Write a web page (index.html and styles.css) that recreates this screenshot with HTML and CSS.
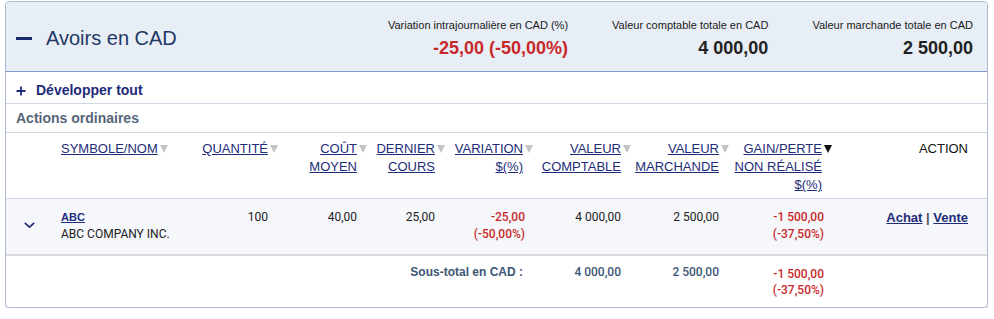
FILE: index.html
```html
<!DOCTYPE html>
<html lang="fr">
<head>
<meta charset="utf-8">
<title>Avoirs en CAD</title>
<link rel="stylesheet" href="styles.css">
</head>
<body>
<section class="panel">
  <header class="panel-head">
    <div class="title-wrap">
      <span class="collapse-icon" aria-hidden="true"></span>
      <h1 class="title">Avoirs en CAD</h1>
    </div>
    <div class="summary">
      <div class="sum-item">
        <div class="sum-label">Variation intrajournalière en CAD (%)</div>
        <div class="sum-value neg">-25,00 (-50,00%)</div>
      </div>
      <div class="sum-item">
        <div class="sum-label">Valeur comptable totale en CAD</div>
        <div class="sum-value">4 000,00</div>
      </div>
      <div class="sum-item">
        <div class="sum-label">Valeur marchande totale en CAD</div>
        <div class="sum-value">2 500,00</div>
      </div>
    </div>
  </header>

  <div class="expand-row">
    <svg class="plus-icon" width="10" height="10" viewBox="0 0 10 10" aria-hidden="true"><path d="M5 0.5V9.5M0.5 5H9.5" stroke="#1e2c78" stroke-width="1.8" fill="none"/></svg>
    <span class="expand-label">Développer tout</span>
  </div>

  <div class="group-row">Actions ordinaires</div>

  <table class="holdings">
    <colgroup>
      <col class="w0"><col class="w1"><col class="w2"><col class="w3"><col class="w4">
      <col class="w5"><col class="w6"><col class="w7"><col class="w8"><col class="w9">
    </colgroup>
    <thead>
      <tr>
        <th class="blank"></th>
        <th class="left"><span class="sort"><a href="#">SYMBOLE/NOM</a><i class="arrow"></i></span></th>
        <th><span class="sort"><a href="#">QUANTITÉ</a><i class="arrow"></i></span></th>
        <th><span class="sort"><a href="#">COÛT<br>MOYEN</a><i class="arrow"></i></span></th>
        <th><span class="sort"><a href="#">DERNIER<br>COURS</a><i class="arrow"></i></span></th>
        <th><span class="sort"><a href="#">VARIATION<br>$(%)</a><i class="arrow"></i></span></th>
        <th><span class="sort"><a href="#">VALEUR<br>COMPTABLE</a><i class="arrow"></i></span></th>
        <th><span class="sort"><a href="#">VALEUR<br>MARCHANDE</a><i class="arrow"></i></span></th>
        <th><span class="sort"><a href="#">GAIN/PERTE<br>NON RÉALISÉ<br>$(%)</a><i class="arrow active"></i></span></th>
        <th class="action-head">ACTION</th>
      </tr>
    </thead>
    <tbody>
      <tr>
        <td class="toggle"><svg class="chevron" width="11" height="6" viewBox="0 0 11 6" aria-hidden="true"><path d="M0.8 0.8L5.5 5.2L10.2 0.8" stroke="#1e2c78" stroke-width="1.6" fill="none"/></svg></td>
        <td class="left"><a class="sym" href="#">ABC</a><div class="company">ABC COMPANY INC.</div></td>
        <td>100</td>
        <td>40,00</td>
        <td>25,00</td>
        <td class="neg red">-25,00<br>(-50,00%)</td>
        <td>4 000,00</td>
        <td>2 500,00</td>
        <td class="neg red">-1 500,00<br>(-37,50%)</td>
        <td class="actions"><a href="#">Achat</a> <span class="sep">|</span> <a href="#">Vente</a></td>
      </tr>
    </tbody>
    <tfoot>
      <tr>
        <td></td>
        <td colspan="5" class="sub-label">Sous-total en CAD :</td>
        <td class="sub-num">4 000,00</td>
        <td class="sub-num">2 500,00</td>
        <td class="sub-num neg red">-1 500,00<br>(-37,50%)</td>
        <td></td>
      </tr>
    </tfoot>
  </table>
</section>
</body>
</html>
```

FILE: styles.css
```css
* { box-sizing: border-box; }

html, body {
  margin: 0;
  padding: 0;
  background: #ffffff;
}

body {
  font-family: "Liberation Sans", Arial, sans-serif;
  color: #1a1a1a;
}

.panel {
  margin: 1px 6px 0 5px;
  border: 1px solid #aebad4;
  border-radius: 4px;
  overflow: hidden;
  box-shadow: 0 1px 0 #c3cbdd;
}

/* Header */
.panel-head {
  display: flex;
  justify-content: space-between;
  height: 70px;
  background: #e8eef5;
  border-bottom: 1px solid #7f96c8;
}

.title-wrap {
  display: flex;
  align-items: center;
  padding: 3px 0 0 10px;
}

.collapse-icon {
  display: block;
  width: 16px;
  height: 3px;
  background: #1a2a6c;
}

.title {
  margin: 0 0 0 14px;
  font-size: 20px;
  line-height: 24px;
  font-weight: normal;
  color: #1d3966;
}

.summary {
  display: flex;
  gap: 44px;
  padding: 16px 14px 0 0;
}

.sum-item {
  text-align: right;
}

.sum-label {
  font-size: 11px;
  line-height: 14px;
  color: #1a1a1a;
}

.sum-value {
  margin-top: 5px;
  font-size: 18px;
  line-height: 22px;
  font-weight: bold;
  color: #222222;
}

.sum-value.neg { color: #c8282a; }

/* Expand / group rows */
.expand-row {
  display: flex;
  align-items: center;
  gap: 10px;
  height: 32px;
  padding: 4px 0 0 10px;
  border-bottom: 1px solid #ccd6e4;
}

.plus-icon { display: block; margin-top: 3px; }

.expand-label {
  font-size: 14px;
  font-weight: bold;
  color: #1e2c78;
}

.group-row {
  height: 29px;
  display: flex;
  align-items: center;
  padding-left: 10px;
  font-size: 14px;
  font-weight: bold;
  color: #56657a;
  border-bottom: 1px solid #ccd6e4;
}

/* Table */
.holdings {
  width: 100%;
  table-layout: fixed;
  border-collapse: collapse;
}

.w0 { width: 55px; }
.w1 { width: 129px; }
.w2 { width: 90px; }
.w3 { width: 89px; }
.w4 { width: 78px; }
.w5 { width: 88px; }
.w6 { width: 98px; }
.w7 { width: 98px; }
.w8 { width: 103px; }
.w9 { width: 153px; }

.holdings th {
  padding: 7px 12px 4px 0;
  font-size: 13px;
  line-height: 18px;
  font-weight: normal;
  text-align: right;
  vertical-align: top;
  border-bottom: 1px solid #ccd6e4;
}

.holdings th.left { text-align: left; }

.sort {
  position: relative;
  display: inline-block;
}

.sort a {
  color: #1e2c78;
  text-decoration: underline;
}

.arrow {
  position: absolute;
  left: calc(100% + 2px);
  top: 5px;
  width: 0;
  height: 0;
  border-left: 4px solid transparent;
  border-right: 4px solid transparent;
  border-top: 8px solid #c4c4c4;
}

.arrow.active { border-top-color: #111111; }

.holdings th.action-head {
  padding-right: 19px;
  color: #111111;
}

.holdings tbody tr { background: #f5f7fa; }

.holdings tbody td {
  padding: 10px 12px 11px 0;
  font-family: Roboto, "Liberation Sans", sans-serif;
  font-size: 12px;
  line-height: 17px;
  color: #222222;
  text-align: right;
  vertical-align: top;
  border-bottom: 2px solid #dadada;
}

.holdings td.left { text-align: left; }

.holdings td.toggle { padding-left: 18px; text-align: left; }

.chevron { display: block; margin-top: 13px; }

.sym {
  font-family: "Liberation Sans", Arial, sans-serif;
  font-size: 11px;
  font-weight: bold;
  color: #262d85;
  text-decoration: underline;
}

.company { color: #222222; }

.holdings td.red {
  color: #c8282a;
  font-weight: 500;
  padding-right: 10px;
}

.holdings td.actions {
  padding-right: 19px;
  font-family: "Liberation Sans", Arial, sans-serif;
  font-size: 13px;
  font-weight: bold;
}

.actions a {
  color: #1e2c78;
  text-decoration: underline;
}

.actions .sep { color: #555555; }

/* Subtotal */
.holdings tfoot td {
  padding: 8px 12px 0 0;
  font-size: 12px;
  line-height: 17px;
  text-align: right;
  vertical-align: top;
  height: 52px;
}

.holdings td.sub-label {
  font-weight: bold;
  color: #3c5676;
}

.holdings td.sub-num {
  font-family: Roboto, "Liberation Sans", sans-serif;
  font-weight: 500;
  color: #3c5676;
}

.holdings tfoot td.red {
  padding-top: 10px;
  padding-right: 10px;
  line-height: 16px;
  color: #c8282a;
  font-weight: 500;
}
```
